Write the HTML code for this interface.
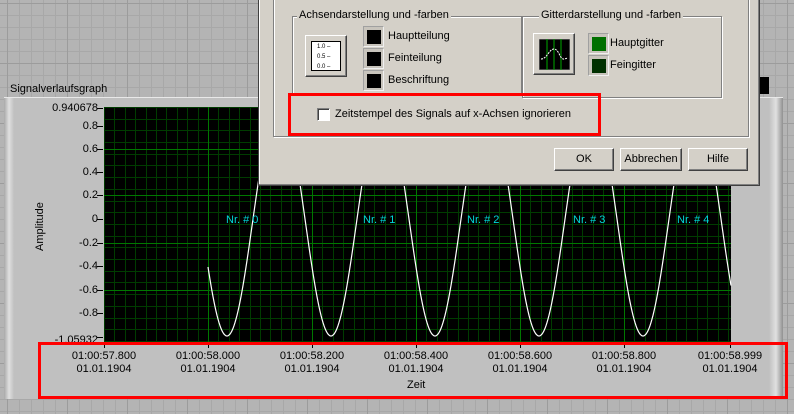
<!DOCTYPE html>
<html><head><meta charset="utf-8"><style>
*{margin:0;padding:0;box-sizing:border-box}
body{width:794px;height:414px;overflow:hidden;position:relative;font-family:"Liberation Sans",sans-serif;font-size:11px;color:#000;
background-color:#b4b4b4;
background-image:linear-gradient(#9c9c9c 1px,transparent 1px),linear-gradient(90deg,#9c9c9c 1px,transparent 1px),linear-gradient(#a8a8a8 1px,transparent 1px),linear-gradient(90deg,#a8a8a8 1px,transparent 1px);
background-size:60px 60px,60px 60px,12px 12px,12px 12px;background-position:7px 3px,7px 3px,7px 3px,7px 3px}
.a{position:absolute;white-space:nowrap}
.panel{left:4px;top:97px;width:779px;height:302px;background:#c0c0c0;border-top:1px solid #e8e8e8;}
.panel:before{content:"";position:absolute;left:0;top:0;width:10px;height:100%;background:linear-gradient(90deg,#a8a8a8,#e0e0e0,#c0c0c0)}
.panel:after{content:"";position:absolute;right:0;top:0;width:14px;height:100%;background:linear-gradient(90deg,#c0c0c0,#e0e0e0,#909090)}
.yl{right:696px;width:80px;text-align:right;font-size:11px}
.tl{width:100px;text-align:center;line-height:13px;font-size:11px}
.dlg{left:258px;top:-2px;width:502px;height:188px;background:#d4d0c8;border:1px solid #404040;border-top:none;box-shadow:inset -1px -1px #808080,inset 1px 0 #fff}
.btn{position:absolute;background:#d4d0c8;border:1px solid;border-color:#fff #404040 #404040 #fff;box-shadow:inset -1px -1px #808080;text-align:center;line-height:21px;font-size:11px}
.sw{position:absolute;width:21px;height:21px;background:#c8c4bc;border:1px solid;border-color:#a0a0a0 #f0f0f0 #f0f0f0 #a0a0a0}
.sw i{position:absolute;left:3px;top:3px;width:14px;height:14px;background:#000}
.red{position:absolute;border:3px solid #f00}
</style></head><body>
<div class="a" style="left:10px;top:83px;font-size:11px">Signalverlaufsgraph</div>
<div class="a" style="left:760px;top:77px;width:9px;height:17px;background:#000"></div>
<div class="a panel"></div>
<div class="a" style="left:34px;top:251px;transform:rotate(-90deg);transform-origin:left top;font-size:11px">Amplitude</div>
<div class="a yl" style="top:102px">0.940678</div>
<div class="a yl" style="top:120px">0.8</div>
<div class="a yl" style="top:143px">0.6</div>
<div class="a yl" style="top:166px">0.4</div>
<div class="a yl" style="top:189px">0.2</div>
<div class="a yl" style="top:213px">0</div>
<div class="a yl" style="top:237px">-0.2</div>
<div class="a yl" style="top:260px">-0.4</div>
<div class="a yl" style="top:284px">-0.6</div>
<div class="a yl" style="top:307px">-0.8</div>
<div class="a yl" style="top:334px">-1.05932</div>
<svg class="a" style="left:0;top:0" width="794" height="414">
<g stroke="#000" stroke-width="1">
<line x1="97" y1="108.5" x2="103" y2="108.5"/><line x1="97" y1="126.5" x2="103" y2="126.5"/><line x1="97" y1="149.5" x2="103" y2="149.5"/><line x1="97" y1="172.5" x2="103" y2="172.5"/><line x1="97" y1="195.5" x2="103" y2="195.5"/><line x1="97" y1="219.5" x2="103" y2="219.5"/><line x1="97" y1="243.5" x2="103" y2="243.5"/><line x1="97" y1="266.5" x2="103" y2="266.5"/><line x1="97" y1="290.5" x2="103" y2="290.5"/><line x1="97" y1="313.5" x2="103" y2="313.5"/><line x1="97" y1="337.5" x2="103" y2="337.5"/>
</g>
<rect x="104" y="107" width="627" height="236" fill="#000"/>
<g id="grid"></g>
<path id="sig" fill="none" stroke="#fff" stroke-width="1.2"/>
<g stroke="#000"><line x1="104.5" y1="343" x2="104.5" y2="348"/><line x1="208.5" y1="343" x2="208.5" y2="348"/><line x1="312.5" y1="343" x2="312.5" y2="348"/><line x1="416.5" y1="343" x2="416.5" y2="348"/><line x1="520.5" y1="343" x2="520.5" y2="348"/><line x1="624.5" y1="343" x2="624.5" y2="348"/><line x1="730.5" y1="343" x2="730.5" y2="348"/></g>
<g fill="#00d8d8" font-family="Liberation Sans" font-size="11"><text x="226" y="223">Nr. # 0</text><text x="363" y="223">Nr. # 1</text><text x="467" y="223">Nr. # 2</text><text x="573" y="223">Nr. # 3</text><text x="677" y="223">Nr. # 4</text></g>
</svg>
<script>
var g=document.getElementById('grid'),s='';
for(var y=107;y<343;y+=11.7){s+='<line x1="104" x2="731" y1="'+(Math.round(y)+.5)+'" y2="'+(Math.round(y)+.5)+'" stroke="#003c00"/>';}
for(var x=104;x<731;x+=10.4){s+='<line y1="107" y2="343" x1="'+(Math.round(x)+.5)+'" x2="'+(Math.round(x)+.5)+'" stroke="#003c00"/>';}
[149,195,243,290].forEach(function(y){s+='<line x1="104" x2="731" y1="'+(y+.5)+'" y2="'+(y+.5)+'" stroke="#007800"/>';});
[208,312,416,520,624].forEach(function(x){s+='<line y1="107" y2="343" x1="'+(x+.5)+'" x2="'+(x+.5)+'" stroke="#007800"/>';});
g.innerHTML=s;
var d='';for(var x=208;x<=731;x+=1){var v=-Math.cos(2*Math.PI*(x-227)/104);var y=219-v*117;d+=(x==208?'M':'L')+x+' '+Math.max(107,y).toFixed(1);}
document.getElementById('sig').setAttribute('d',d);
</script>
<div class="a tl" style="left:54px;top:350px">01:00:57.800<br>01.01.1904</div>
<div class="a tl" style="left:158px;top:350px">01:00:58.000<br>01.01.1904</div>
<div class="a tl" style="left:262px;top:350px">01:00:58.200<br>01.01.1904</div>
<div class="a tl" style="left:366px;top:350px">01:00:58.400<br>01.01.1904</div>
<div class="a tl" style="left:470px;top:350px">01:00:58.600<br>01.01.1904</div>
<div class="a tl" style="left:574px;top:350px">01:00:58.800<br>01.01.1904</div>
<div class="a tl" style="left:680px;top:350px">01:00:58.999<br>01.01.1904</div>
<div class="a" style="left:407px;top:379px">Zeit</div>
<div class="red" style="left:38px;top:342px;width:750px;height:57px"></div>

<div class="a dlg">
 <div class="a" style="left:14px;top:0;width:476px;height:139px;border:1px solid #808080;border-top:none;box-shadow:1px 1px #fff, inset 1px 0 #fff"></div>
 <div class="a" style="left:33px;top:18px;width:230px;height:78px;border:1px solid #808080;box-shadow:inset 1px 1px #fff,1px 1px #fff;border-bottom:none"></div>
 <div class="a" style="left:38px;top:11px;background:#d4d0c8;padding:0 2px">Achsendarstellung und -farben</div>
 <div class="a" style="left:263px;top:18px;width:200px;height:82px;border:1px solid #808080;box-shadow:inset 1px 1px #fff,1px 1px #fff"></div>
 <div class="a" style="left:280px;top:11px;background:#d4d0c8;padding:0 2px">Gitterdarstellung und -farben</div>
 <div class="btn" style="left:46px;top:37px;width:42px;height:42px"><div style="position:absolute;left:5px;top:5px;width:30px;height:30px;background:#fff;border:1px solid #000;font-size:6px;line-height:10px;text-align:left;padding-left:5px">1.0 ‒<br>0.5 ‒<br>0.0 ‒</div></div>
 <div class="sw" style="left:104px;top:28px"><i></i></div>
 <div class="sw" style="left:104px;top:50px"><i></i></div>
 <div class="sw" style="left:104px;top:72px"><i></i></div>
 <div class="a" style="left:129px;top:32px">Hauptteilung</div>
 <div class="a" style="left:129px;top:54px">Feinteilung</div>
 <div class="a" style="left:129px;top:76px">Beschriftung</div>
 <div class="btn" style="left:274px;top:35px;width:42px;height:42px"><svg style="position:absolute;left:5px;top:5px" width="31" height="31"><rect width="31" height="31" fill="#000" stroke="#888"/><g stroke="#0a0"><line x1="8" y1="0" x2="8" y2="31"/><line x1="15" y1="0" x2="15" y2="31"/><line x1="22" y1="0" x2="22" y2="31"/></g><path d="M2 20 C8 20 10 10 15 10 C20 10 21 21 25 20 L29 19" fill="none" stroke="#fff" stroke-dasharray="2 1"/></svg></div>
 <div class="sw" style="left:329px;top:35px"><i style="background:#007000"></i></div>
 <div class="sw" style="left:329px;top:57px"><i style="background:#003000"></i></div>
 <div class="a" style="left:351px;top:39px">Hauptgitter</div>
 <div class="a" style="left:351px;top:61px">Feingitter</div>
 <div class="a" style="left:58px;top:110px;width:13px;height:13px;background:#fff;border:1px solid;border-color:#808080 #fff #fff #808080;box-shadow:inset 1px 1px #404040"></div>
 <div class="a" style="left:76px;top:110px">Zeitstempel des Signals auf x-Achsen ignorieren</div>
 <div class="red" style="left:29px;top:95px;width:313px;height:43px"></div>
 <div class="btn" style="left:295px;top:150px;width:60px;height:23px">OK</div>
 <div class="btn" style="left:361px;top:150px;width:62px;height:23px">Abbrechen</div>
 <div class="btn" style="left:429px;top:150px;width:60px;height:23px">Hilfe</div>
</div>
</body></html>
